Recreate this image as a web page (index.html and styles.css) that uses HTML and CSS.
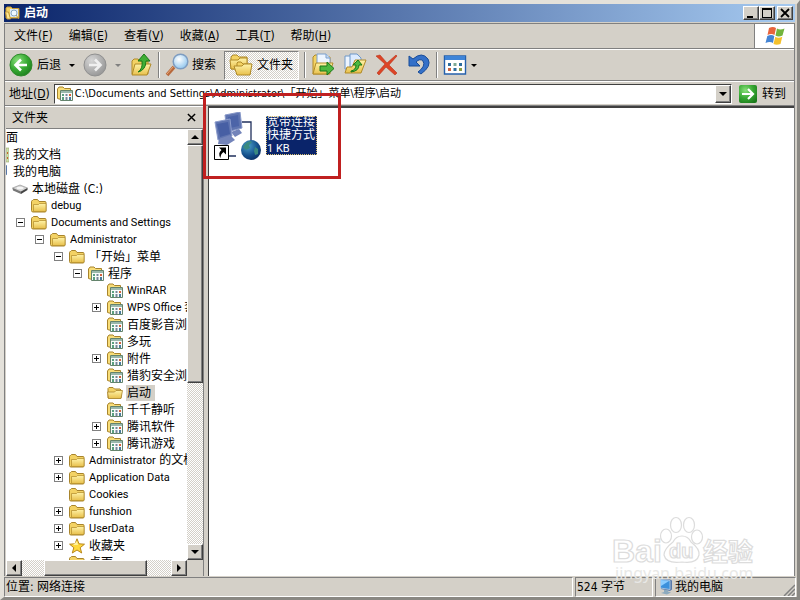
FILE: index.html
```html
<!DOCTYPE html>
<html lang="zh-CN">
<head>
<meta charset="utf-8">
<title>启动</title>
<link rel="stylesheet" href="styles.css">
</head>
<body>
<svg class="defs" aria-hidden="true">
  <defs>
    <linearGradient id="gFolder" x1="0" y1="0" x2="0" y2="1"><stop offset="0" stop-color="#fff3a8"/><stop offset="1" stop-color="#e8c04c"/></linearGradient>
    <radialGradient id="gGreen" cx=".35" cy=".3" r=".8"><stop offset="0" stop-color="#8ae07c"/><stop offset=".55" stop-color="#36a832"/><stop offset="1" stop-color="#1b7a1c"/></radialGradient>
    <radialGradient id="gGrey" cx=".35" cy=".3" r=".8"><stop offset="0" stop-color="#d6d6d6"/><stop offset="1" stop-color="#929292"/></radialGradient>
    <radialGradient id="gGlass" cx=".4" cy=".35" r=".7"><stop offset="0" stop-color="#ffffff"/><stop offset="1" stop-color="#8cc4ee"/></radialGradient>
    <radialGradient id="gGlobe" cx=".35" cy=".3" r=".8"><stop offset="0" stop-color="#4a9fc8"/><stop offset=".6" stop-color="#14508c"/><stop offset="1" stop-color="#0a2c60"/></radialGradient>
  </defs>
  <symbol id="folder" viewBox="0 0 16 16">
    <path d="M.5 12.5v-9q0-1 1-1l1-1h4l1.500 2h6q1 0 1 1v8.500q0 1-1 1h-12q-1.500 0-1.500-1.500z" fill="#f3d264" stroke="#a8842c"/>
    <path d="M2.500 13.500V6.500h5l1-1h6.500v7q0 1-1 1z" fill="url(#gFolder)" stroke="#b08a28" stroke-width=".7"/>
  </symbol>
  <symbol id="open" viewBox="0 0 16 16">
    <path d="M1 13V3.500l1-1h4l1.500 1.500H13l1 1v8z" fill="#f3d264" stroke="#a8842c"/>
    <path d="M1.500 13.500L.5 7h7l1.500-1.500h6.500L14 13.500z" fill="url(#gFolder)" stroke="#a8842c" stroke-width=".8"/>
  </symbol>
  <symbol id="programs" viewBox="0 0 16 16">
    <path d="M.5 12.500v-9.500l1.500-2h4l1.500 1.500h6v3L4 13.500z" fill="#f8dd78" stroke="#a8842c"/>
    <path d="M3.500 4.500h12v10h-12z" fill="#f8fbfa" stroke="#64846c"/>
    <path d="M4 5h11v2H4z" fill="#9ab8ac"/>
    <path d="M5 8h2v2H5zM5 11h2v3H5z" fill="#5aa080"/><path d="M8.500 8h2v2h-2zM8.500 11h2v3h-2z" fill="#78879b"/><path d="M12 8h2v2h-2z" fill="#d4623c"/><path d="M12 11h2v3h-2z" fill="#4a7c9c"/>
  </symbol>
  <symbol id="star" viewBox="0 0 16 16"><path d="M8 .8l2 5 5.500.4-4.300 3.500 1.500 5.300L8 12l-4.700 3 1.500-5.300L.6 6.200 6 5.800z" fill="#ffd93c" stroke="#b8861a"/><path d="M8 3l1 4-5 0z" fill="#fff2a0"/></symbol>
  <symbol id="disk" viewBox="0 0 16 16"><path d="M.5 7L8 4l7.500 3-6.500 5z" fill="#d4d4d4" stroke="#888" stroke-width=".6"/><path d="M.5 7L9 10.500V13L1 9.500z" fill="#777"/><path d="M9 10.500L15.500 7v2L9 13z" fill="#444"/><ellipse cx="8" cy="7" rx="3.500" ry="1.300" fill="#f6f6f6"/></symbol>
  <symbol id="docs" viewBox="0 0 16 16"><path d="M1 2h14v13H1z" fill="#f3d264"/><path d="M13 1h3v14h-3z" fill="#cddfae" stroke="#9aa868" stroke-width=".6"/><path d="M14 5h1v2h-1zM14 10h1v2h-1z" fill="#c86432"/></symbol>
  <symbol id="computer" viewBox="0 0 16 16"><path d="M3 .5h9l2 1v9l-2 1.500-9-2z" fill="#5878a8"/><path d="M2.500.5l9.500 1v9l-9.500-1.500z" fill="#3c90dc" stroke="#b4cce4" stroke-width=".8"/><path d="M3 1l8 1-8 5z" fill="#8cccff"/><path d="M6 11h4v1.500l3 1-4 2L3 14l3-1z" fill="#8caabe"/></symbol>
</svg>

<div class="window">
  <header class="titlebar">
    <svg class="i16" viewBox="0 0 16 16"><path d="M1 13V3l1-1h4l1.500 1.500H14v9.500z" fill="#f3d264" stroke="#c49a38"/><path d="M5 4h8v8H5z" fill="#dceaf6"/><circle cx="9" cy="8" r="3" fill="#eef8ff" stroke="#88a8c4"/><path d="M2 14L.5 7h3l2 7zM11 10l3 4" fill="#ffe890" stroke="#c49a38"/></svg>
    <h1>启动</h1>
    <div class="winbtns">
      <button class="bevel" aria-label="最小化"><svg viewBox="0 0 12 10"><path d="M2 8h6v2H2z"/></svg></button>
      <button class="bevel" aria-label="最大化"><svg viewBox="0 0 12 10"><path d="M1 0h10v10H1zM2 2v7h8V2z" fill-rule="evenodd"/></svg></button>
      <button class="bevel gap" aria-label="关闭"><svg viewBox="0 0 12 10"><path d="M2 1l8 8M10 1L2 9" stroke="#000" stroke-width="1.800"/></svg></button>
    </div>
  </header>

  <div class="bars">
    <div class="menurow">
      <nav class="menu">
        <button>文件(<u>F</u>)</button><button>编辑(<u>E</u>)</button><button>查看(<u>V</u>)</button><button>收藏(<u>A</u>)</button><button>工具(<u>T</u>)</button><button>帮助(<u>H</u>)</button>
      </nav>
      <div class="flag"><svg viewBox="0 0 20 20"><path d="M4 2q4-2 7 0L9.500 9q-3-2-7 0z" fill="#e8643c"/><path d="M12 2.500q3 2 7.500 0L17.500 9.500q-4 2-7 0z" fill="#72b43c"/><path d="M2.300 10q4-2 7 0L8 17q-3-2-7.500 0z" fill="#4484d4"/><path d="M10.300 10.700q3 2 7 0L15.500 18q-4 1.500-7 0z" fill="#f4c02c"/></svg></div>
    </div>

    <div class="toolbar">
      <button class="tool back"><svg class="i24" viewBox="0 0 24 24"><circle cx="12" cy="12" r="11" fill="url(#gGreen)" stroke="#2f8a2c"/><path d="M18 12H7M12 6.500L6.500 12l5.500 5.500" fill="none" stroke="#fff" stroke-width="2.600"/></svg><span>后退</span><i class="caret"></i></button>
      <button class="tool fwd" aria-label="前进"><svg class="i24" viewBox="0 0 24 24"><circle cx="12" cy="12" r="11" fill="url(#gGrey)" stroke="#909090"/><path d="M6 12h11M12 6.500l5.500 5.500-5.500 5.500" fill="none" stroke="#f0f0f0" stroke-width="2.600"/></svg><i class="caret dim"></i></button>
      <button class="tool up" aria-label="向上"><svg class="i24" viewBox="0 0 24 24"><path d="M3 21V8l2-2h4l2 2h8v13z" fill="#f3d264" stroke="#b08a28"/><path d="M3 22l3-11h16l-4 11z" fill="url(#gFolder)" stroke="#b08a28"/><path d="M9 19q5-3 4-11H9l6-7 6 7h-4q0 9-8 11z" fill="#3fae35" stroke="#187818"/></svg></button>
      <span class="sep"></span>
      <button class="tool search"><svg class="i24" viewBox="0 0 24 24"><path d="M9 14L2 22" stroke="#b8693c" stroke-width="3.500"/><path d="M8 14l-6 7" stroke="#e8a878"/><circle cx="15.500" cy="8.500" r="7.300" fill="url(#gGlass)" stroke="#7e9cc0" stroke-width="1.500"/></svg><span>搜索</span></button>
      <button class="tool pressed" aria-pressed="true"><svg class="i24" viewBox="0 0 24 24"><path d="M2 16V4l2-2h4l2 2h8v12z" fill="#f3d264" stroke="#b08a28"/><path d="M2 16L1 7h8l2-2h7v11z" fill="url(#gFolder)" stroke="#b08a28"/><path d="M8 21V10l1-1h3l2 2h8l-1 10z" fill="#f3d264" stroke="#b08a28"/><path d="M8 22L5 13h8l2-2h8l-2 11z" fill="url(#gFolder)" stroke="#b08a28"/></svg><span>文件夹</span></button>
      <span class="sep"></span>
      <div class="icons">
        <button class="tool" aria-label="移至"><svg class="i24" viewBox="0 0 24 24"><path d="M2 21V4l2-2h4l2 2h9v17z" fill="#f3d264" stroke="#b08a28"/><path d="M6 1h9l4 4v12H6z" fill="#edf5ff" stroke="#7ca0cc"/><path d="M15 1v4h4" fill="#c8dcf4" stroke="#7ca0cc"/><path d="M2 21l3-11h17l-4 11z" fill="url(#gFolder)" stroke="#b08a28"/><path d="M9 13h7V9l7 6.500-7 6.500v-4H9z" fill="#4cb840" stroke="#187818"/></svg></button>
        <button class="tool" aria-label="复制到"><svg class="i24" viewBox="0 0 24 24"><path d="M2 3h8l3 3v10H2z" fill="#edf5ff" stroke="#6e98c8"/><path d="M7 1h7l4 4v9H7z" fill="#dcebff" stroke="#6e98c8"/><path d="M2 20l2-6h5l3-7h11l-5 13H3z" fill="url(#gFolder)" stroke="#b08a28"/><path d="M8 18q5-1 5-6h-3l5-5 4 5h-3q0 6-8 7z" fill="#4cb840" stroke="#187818"/></svg></button>
        <button class="tool" aria-label="删除"><svg class="i24" viewBox="0 0 24 24"><path d="M1 3l4-1 7 8 9-8 1 1-8 9 8 8-2 2-9-8-7 8-2-2 8-9z" fill="#dd4426" stroke="#b83218" stroke-width=".6"/></svg></button>
        <button class="tool" aria-label="撤消"><svg class="i24" viewBox="0 0 24 24"><path d="M2 3v10h11L9 9q4-4 7-1 3 5-5 11l3 2q11-8 7-15-6-8-15 0z" fill="#3470c8" stroke="#194c98"/></svg></button>
      </div>
      <span class="sep"></span>
      <button class="tool views" aria-label="查看方式"><svg class="i24" viewBox="0 0 24 24"><path d="M1.500 3h21v18h-21z" fill="#fff" stroke="#2460ac" stroke-width="1.400"/><path d="M2 3h20v4H2z" fill="#3e84d8"/><g fill="#2d6c9c"><path d="M5 10h3v3H5zM16 10h3v3h-3zM10.500 15h3v3h-3z"/><path d="M10.500 10h3v3h-3z" fill="#7eaa94"/><path d="M5 15h3v3H5z" fill="#cc6440"/><path d="M16 15h3v3h-3z" fill="#889c44"/></g></svg><i class="caret"></i></button>
    </div>

    <div class="addressbar">
      <label for="addr">地址(<u>D</u>)</label>
      <div class="combo">
        <svg class="i16"><use href="#programs"/></svg>
        <input id="addr" type="text" value="C:\Documents and Settings\Administrator\「开始」菜单\程序\启动">
        <button class="bevel" aria-label="展开"><i class="caret"></i></button>
      </div>
      <button class="go"><svg viewBox="0 0 18 18"><rect width="18" height="18" rx="2" fill="url(#gGreen)"/><path d="M3 9h10M9 4l5 5-5 5" fill="none" stroke="#fff" stroke-width="2.200"/></svg>转到</button>
    </div>
  </div>

  <main class="content">
    <aside class="folders">
      <div class="panehead"><h2>文件夹</h2><button aria-label="关闭"><svg viewBox="0 0 10 10"><path d="M1 1l8 8M9 1L1 9" stroke="#000" stroke-width="1.600"/></svg></button></div>
      <div class="treebox">
        <div class="treeview">
          <ul class="tree">
            <li><div class="row"><button class="tg minus" aria-label="折叠"></button><svg class="i16"><use href="#computer"/></svg><span>桌面</span></div>
              <ul>
                <li><div class="row"><button class="tg plus" aria-label="展开"></button><svg class="i16"><use href="#docs"/></svg><span>我的文档</span></div></li>
                <li><div class="row"><button class="tg minus" aria-label="折叠"></button><svg class="i16"><use href="#computer"/></svg><span>我的电脑</span></div>
                  <ul>
                    <li><div class="row"><button class="tg minus" aria-label="折叠"></button><svg class="i16"><use href="#disk"/></svg><span>本地磁盘 (C:)</span></div>
                      <ul>
                        <li><div class="row"><i class="tg"></i><svg class="i16"><use href="#folder"/></svg><span class="en">debug</span></div></li>
                        <li><div class="row"><button class="tg minus" aria-label="折叠"></button><svg class="i16"><use href="#folder"/></svg><span class="en">Documents and Settings</span></div>
                          <ul>
                            <li><div class="row"><button class="tg minus" aria-label="折叠"></button><svg class="i16"><use href="#folder"/></svg><span class="en">Administrator</span></div>
                              <ul>
                                <li><div class="row"><button class="tg minus" aria-label="折叠"></button><svg class="i16"><use href="#folder"/></svg><span>「开始」菜单</span></div>
                                  <ul>
                                    <li><div class="row"><button class="tg minus" aria-label="折叠"></button><svg class="i16"><use href="#programs"/></svg><span>程序</span></div>
                                      <ul>
                                        <li><div class="row"><i class="tg"></i><svg class="i16"><use href="#programs"/></svg><span class="en">WinRAR</span></div></li>
                                        <li><div class="row"><button class="tg plus" aria-label="展开"></button><svg class="i16"><use href="#programs"/></svg><span class="en">WPS Office 套件</span></div></li>
                                        <li><div class="row"><i class="tg"></i><svg class="i16"><use href="#programs"/></svg><span>百度影音浏览器</span></div></li>
                                        <li><div class="row"><i class="tg"></i><svg class="i16"><use href="#programs"/></svg><span>多玩</span></div></li>
                                        <li><div class="row"><button class="tg plus" aria-label="展开"></button><svg class="i16"><use href="#programs"/></svg><span>附件</span></div></li>
                                        <li><div class="row"><i class="tg"></i><svg class="i16"><use href="#programs"/></svg><span>猎豹安全浏览器</span></div></li>
                                        <li><div class="row"><i class="tg"></i><svg class="i16"><use href="#open"/></svg><span class="current">启动</span></div></li>
                                        <li><div class="row"><i class="tg"></i><svg class="i16"><use href="#programs"/></svg><span>千千静听</span></div></li>
                                        <li><div class="row"><button class="tg plus" aria-label="展开"></button><svg class="i16"><use href="#programs"/></svg><span>腾讯软件</span></div></li>
                                        <li><div class="row"><button class="tg plus" aria-label="展开"></button><svg class="i16"><use href="#programs"/></svg><span>腾讯游戏</span></div></li>
                                      </ul></li>
                                  </ul></li>
                                <li><div class="row"><button class="tg plus" aria-label="展开"></button><svg class="i16"><use href="#folder"/></svg><span><span class="en">Administrator</span> 的文档</span></div></li>
                                <li><div class="row"><button class="tg plus" aria-label="展开"></button><svg class="i16"><use href="#folder"/></svg><span class="en">Application Data</span></div></li>
                                <li><div class="row"><i class="tg"></i><svg class="i16"><use href="#folder"/></svg><span class="en">Cookies</span></div></li>
                                <li><div class="row"><button class="tg plus" aria-label="展开"></button><svg class="i16"><use href="#folder"/></svg><span class="en">funshion</span></div></li>
                                <li><div class="row"><button class="tg plus" aria-label="展开"></button><svg class="i16"><use href="#folder"/></svg><span class="en">UserData</span></div></li>
                                <li><div class="row"><button class="tg plus" aria-label="展开"></button><svg class="i16"><use href="#star"/></svg><span>收藏夹</span></div></li>
                                <li><div class="row"><i class="tg"></i><svg class="i16"><use href="#folder"/></svg><span>桌面</span></div></li>
                              </ul></li>
                          </ul></li>
                      </ul></li>
                  </ul></li>
              </ul></li>
          </ul>
        </div>
        <div class="vbar"><button class="bevel" aria-label="向上滚动"><i class="caret upw"></i></button><span class="bevel vthumb"></span><span class="vtrack"></span><button class="bevel" aria-label="向下滚动"><i class="caret dnw"></i></button></div>
        <div class="hbar"><button class="bevel" aria-label="向左滚动"><i class="caret lft"></i></button><span class="htrack"></span><span class="bevel hthumb"></span><span class="htrack right"></span><button class="bevel" aria-label="向右滚动"><i class="caret rgt"></i></button></div>
        <span class="corner"></span>
      </div>
    </aside>

    <section class="files">
      <div class="file">
        <svg class="net" viewBox="0 0 48 48"><path d="M28 10h9v19M14 44h8" fill="none" stroke="#20305c" stroke-width="1.300"/><path d="M11 3l15-3 2 16-15 4z" fill="#5f74b0" stroke="#8798c8"/><path d="M14 5l10-2 1 11-9 2z" fill="#4c64a8"/><path d="M17 20l8-3 3 4-7 4z" fill="#7384ba"/><path d="M1 10l15-3 2 17-14 4z" fill="#5f74b0" stroke="#8c9ccc"/><path d="M3 12l11-2 2 12-10 3z" fill="#475fa4"/><path d="M5 27l11-4 5 5-8 5-9-1z" fill="#7384ba"/><circle cx="37" cy="38" r="10" fill="url(#gGlobe)"/><path d="M32 31q4-3 6-1l-3 3 1 3-4 2-3-3zM41 35l3 2v5l-3 1-1-4z" fill="#3a8a80"/><path d="M.5 33.500h14v14H.5z" fill="#fff" stroke="#000"/><path d="M5 35.500h7v7l-2.500-2.500q-3 2-3 6-3-5 1-8z"/></svg>
        <div class="label">宽带连接<br>快捷方式<br><span class="en">1 KB</span></div>
        <div class="highlight"></div>
      </div>
      <svg class="watermark" viewBox="0 0 144 72" role="img" aria-label="Baidu 经验"><g fill="#fff" stroke="#dcdcdc" stroke-width="1.200"><ellipse cx="54" cy="20" rx="5.500" ry="7"/><ellipse cx="64" cy="9" rx="5.500" ry="7.500"/><ellipse cx="77" cy="9" rx="5.500" ry="7.500"/><ellipse cx="85" cy="21" rx="5.500" ry="7"/><path d="M70 20q6 0 9 6 9 7 8 13-2 9-17 7-16 2-18-7 0-6 9-13 3-6 9-6z"/><text x="0" y="46" class="wm-lg">Bai</text><text x="57" y="42" class="wm-sm">du</text><text x="91" y="45" class="wm-cn">经验</text></g><text x="3" y="63" class="wm-url">jingyan.baidu.com</text></svg>
    </section>
  </main>

  <footer class="status"><span class="loc">位置: 网络连接</span><span class="size">524 字节</span><span class="zone"><svg class="i16"><use href="#computer"/></svg>我的电脑</span><svg class="grip" viewBox="0 0 12 12"><path d="M1 12L12 1M5 12l7-7M9 12l3-3" stroke="#808080" stroke-width="1.500"/></svg></footer>
</div>
</body>
</html>
```
FILE: styles.css
```css
* { box-sizing: border-box; }
html, body { height: 100%; margin: 0; }
body { font: 12px/16px "DejaVu Sans Condensed", "Noto Sans CJK SC", sans-serif; color: #000; background: #d4d0c8; }
button { font: inherit; color: inherit; background: none; border: 0; padding: 0; margin: 0; }
h1, h2, ul { margin: 0; padding: 0; font-size: 12px; list-style: none; }
svg { display: block; flex: none; }
.defs { position: absolute; width: 0; height: 0; }
.i16 { width: 16px; height: 16px; }
.i24 { width: 24px; height: 24px; }
.en { font-family: Roboto, "Noto Sans CJK SC", sans-serif; font-size: 11px; }

.window { height: 100vh; min-height: 400px; display: flex; flex-direction: column; background: #d4d0c8; border: 4px solid #e4e1da; border-width: 4px 3px 3px 4px; border-right-color: #8a8883; border-bottom-color: #8a8883; }
.bevel { display: flex; align-items: center; justify-content: center; background: #d4d0c8; border: 1px solid; border-color: #fff #404040 #404040 #fff; box-shadow: inset -1px -1px #808080; }

.titlebar { height: 18px; flex: none; display: flex; align-items: center; gap: 3px; margin-right: 2px; padding: 0 2px 0 1px; color: #fff; background: linear-gradient(90deg, #0a246a, #a6caf0); }
.titlebar h1 { flex: 1; font-weight: 700; }
.winbtns { display: flex; }
.winbtns .bevel { width: 16px; height: 14px; }
.winbtns .gap { margin-left: 2px; }
.winbtns svg { width: 12px; height: 10px; }

.bars { flex: none; margin: 1px 2px 0 0; border: 1px solid #808080; border-bottom: 0; }
.menurow { display: flex; height: 25px; border-bottom: 1px solid #808080; }
.menu { flex: 1; display: flex; gap: 16px; padding-left: 9px; border-right: 1px solid #808080; }
.flag { width: 39px; display: grid; place-items: center; background: #fff; }
.flag svg { width: 20px; height: 20px; }
.toolbar { height: 32px; display: flex; align-items: center; padding: 0 4px; border-top: 1px solid #fff; border-bottom: 1px solid #808080; }
.tool { display: flex; align-items: center; gap: 4px; flex: none; }
.caret { width: 0; height: 0; border: 3px solid transparent; border-top-color: #000; border-bottom: 0; }
.caret.dim { border-top-color: #808080; }
.combo .caret, .dnw { border-width: 4px 4px 0; }
.upw { border: 4px solid transparent; border-bottom-color: #000; border-top: 0; }
.lft { border: 4px solid transparent; border-right-color: #000; border-left: 0; }
.rgt { border: 4px solid transparent; border-left-color: #000; border-right: 0; }
.back .caret { margin-left: 4px; }
.fwd { margin-left: 8px; }
.fwd .caret { margin-left: 4px; }
.up { margin-left: 8px; }
.sep { width: 2px; height: 26px; margin: 0 5px; background: #808080; border-right: 1px solid #fff; }
.search { margin-right: 8px; }
.search span { margin-left: -1px; }
.pressed { height: 29px; width: 75px; padding-left: 4px; border: 1px solid; border-color: #808080 #fff #fff #808080; background: repeating-conic-gradient(#d4d0c8 0 25%, #fff 0 50%) 0 0 / 2px 2px; }
.icons { display: flex; gap: 8px; }
.icons .tool { width: 24px; }
.addressbar { height: 24px; display: flex; align-items: center; padding-left: 4px; border-top: 1px solid #fff; }
.combo { flex: 1; height: 20px; display: flex; align-items: center; margin-left: 4px; padding-left: 2px; background: #fff; border: 1px solid; border-color: #404040 #fff #fff #404040; }
.combo input { flex: 1; min-width: 0; height: 16px; margin-left: 2px; padding: 0; border: 0; outline: 0; background: none; font: inherit; font-size: 11px; }
.combo .bevel { width: 16px; height: 18px; }
.go { display: flex; align-items: center; gap: 5px; margin: 0 8px 0 7px; }
.go svg { width: 18px; height: 18px; }

.content { flex: 1; min-height: 0; display: flex; gap: 4px; margin-right: 2px; border: 1px solid #808080; border-width: 1px 1px 0; }
.folders { width: 199px; flex: none; display: flex; flex-direction: column; padding-left: 1px; border-top: 1px solid #fff; border-right: 1px solid #808080; }
.panehead { height: 22px; flex: none; display: flex; align-items: center; justify-content: space-between; padding: 0 7px 0 6px; border-bottom: 1px solid #808080; }
.panehead h2 { font-weight: 400; }
.panehead svg { width: 9px; height: 9px; }
.treebox { flex: 1; min-height: 0; display: grid; grid-template: minmax(0, 1fr) 16px / minmax(0, 1fr) 16px; background: #fff; }
.treeview { overflow: hidden; }
.tree { margin-left: -47px; }
.tree ul { margin-left: 19px; }
.row { height: 17px; display: flex; align-items: center; white-space: nowrap; }
.row > span { margin-left: 3px; padding: 0 1px; }
.row > .current { background: #d4d0c8; padding-right: 4px; }
.tg { width: 9px; height: 9px; margin-right: 6px; flex: none; }
.minus, .plus { border: 1px solid #808080; background: linear-gradient(#000, #000) center / 5px 1px no-repeat; }
.plus { background: linear-gradient(#000, #000) center / 5px 1px no-repeat, linear-gradient(#000, #000) center / 1px 5px no-repeat; }
.vbar, .hbar, .vtrack, .htrack { background: repeating-conic-gradient(#d4d0c8 0 25%, #fff 0 50%) 0 0 / 2px 2px; }
.vbar { display: flex; flex-direction: column; }
.vbar button { height: 16px; flex: none; }
.vthumb { flex: 236; }
.vtrack { flex: 161; }
.hbar { display: flex; }
.hbar button { width: 16px; flex: none; }
.htrack { flex: 22; }
.hthumb { flex: 103; }
.htrack.right { flex: 24; }
.corner { background: #d4d0c8; }

.files { flex: 1; min-width: 0; position: relative; background: #fff; border: 1px solid #404040; border-width: 2px 0 0 1px; }
.file { position: relative; display: flex; align-items: flex-start; gap: 4px; padding: 4px 5px; width: 130px; }
.net { width: 48px; height: 48px; }
.label { margin-top: 4px; width: 51px; padding: 0 1px; line-height: 13px; color: #fff; background: #0a246a; outline: 1px dotted #d8c070; outline-offset: -1px; }
.highlight { position: absolute; left: -6px; top: -15px; width: 138px; height: 86px; border: 3px solid #c02020; }
.watermark { position: absolute; right: 38px; bottom: -12px; width: 144px; height: 72px; overflow: visible; z-index: 1; }
.wm-lg { font: 700 32px "Liberation Sans", sans-serif; }
.wm-sm { font: 700 20px "Liberation Sans", sans-serif; }
.wm-cn { font: 700 25px "Noto Sans CJK SC", sans-serif; }
.wm-url { font: 16px "Noto Sans", sans-serif; fill: #e8e8e6; }

.status { height: 20px; flex: none; display: flex; align-items: stretch; gap: 2px; margin: 1px 1px 0 0; line-height: 18px; }
.status span { border: 1px solid; border-color: #808080 #fff #fff #808080; padding-left: 1px; }
.loc { flex: 1; }
.size { width: 78px; }
.zone { width: 141px; display: flex; align-items: center; gap: 1px; }
.status .zone { padding-left: 2px; }
.grip { position: absolute; right: 5px; bottom: 4px; width: 12px; height: 12px; }
```
